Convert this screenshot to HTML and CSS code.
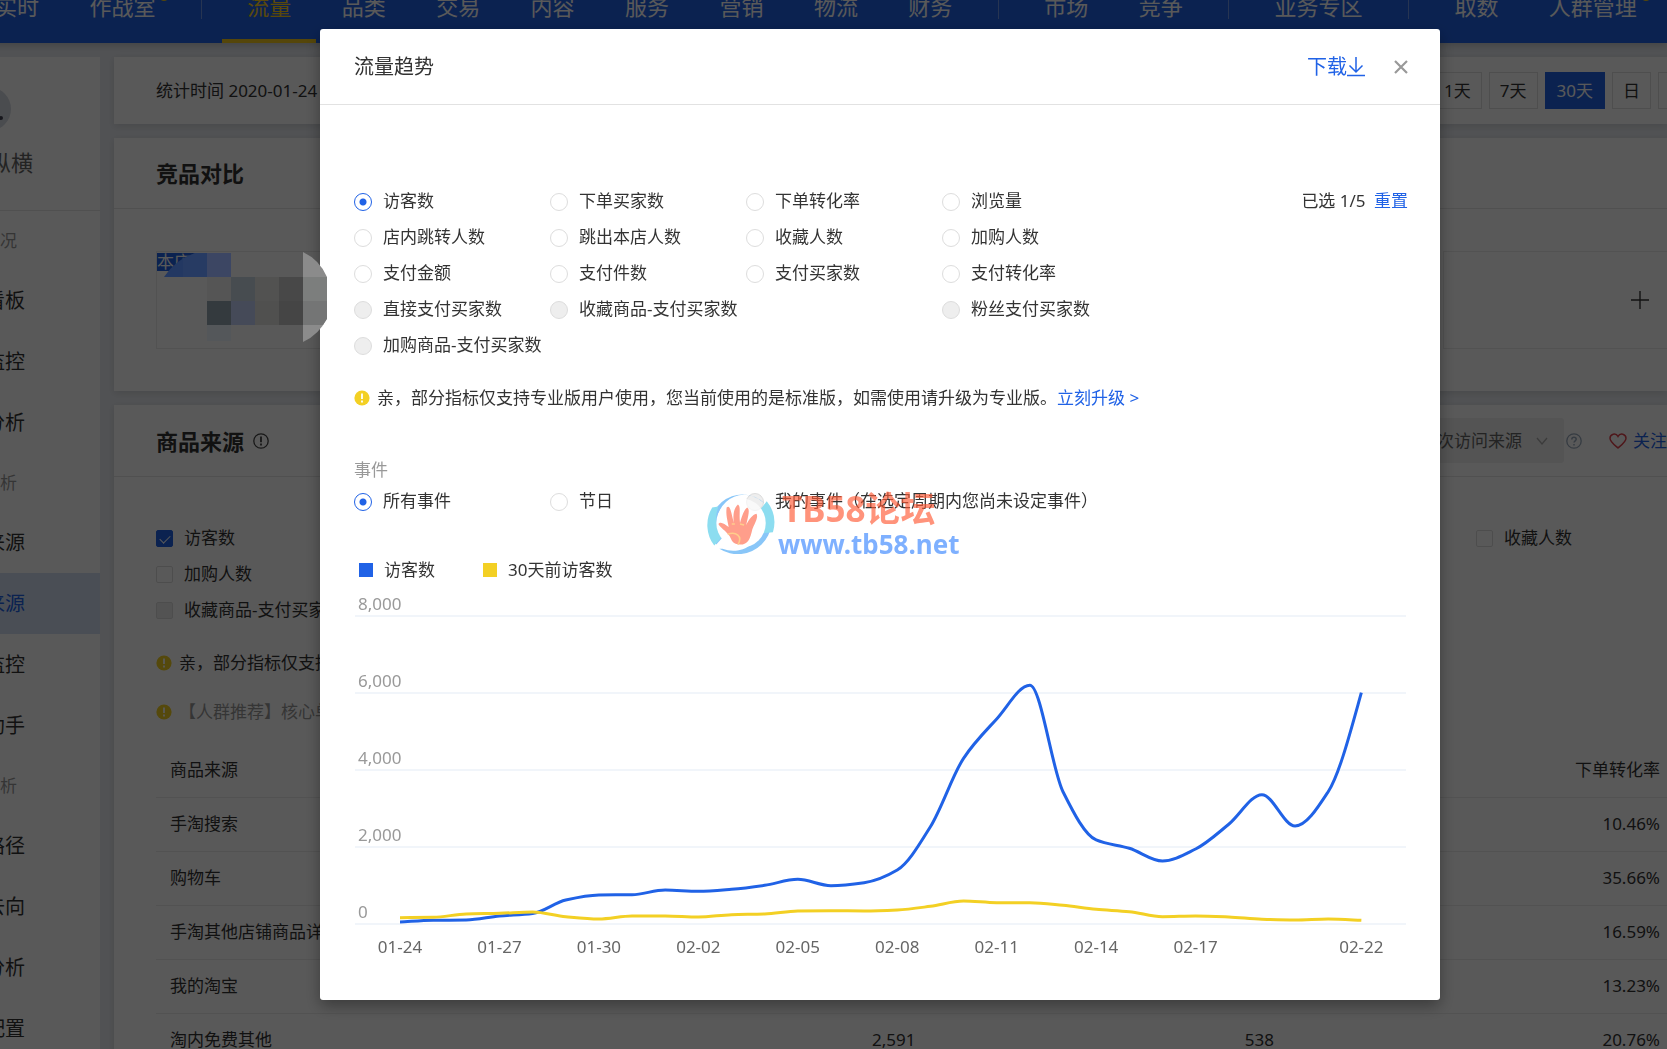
FILE: index.html
```html
<!DOCTYPE html>
<html lang="zh-CN">
<head>
  <meta charset="UTF-8" />
  <meta name="viewport" content="width=device-width, initial-scale=1.0"/>
  <title>流量趋势</title>
  <link rel="stylesheet" href="styles.css">
</head>
<body>
  <nav class="nav">
    <a href="#">实时</a>
    <a href="#" class="has-dot">作战室</a>
    <i></i>
    <a href="#" class="active">流量</a>
    <a href="#">品类</a>
    <a href="#">交易</a>
    <a href="#">内容</a>
    <a href="#">服务</a>
    <a href="#">营销</a>
    <a href="#">物流</a>
    <a href="#">财务</a>
    <i></i>
    <a href="#">市场</a>
    <a href="#">竞争</a>
    <i></i>
    <a href="#">业务专区</a>
    <i></i>
    <a href="#">取数</a>
    <a href="#" class="has-dot">人群管理</a>
  </nav>

  <div class="page">
    <aside class="sidebar">
      <div class="shop">
        <svg class="avatar" width="44" height="44" viewBox="0 0 44 44"><circle cx="22" cy="22" r="22" fill="#d5d9e2"/><circle cx="34" cy="31" r="2" fill="#445"/></svg>
        <span>纵横</span>
      </div>
      <h4>况</h4>
      <a href="#">看板</a>
      <a href="#">监控</a>
      <a href="#">分析</a>
      <h4>析</h4>
      <a href="#">来源</a>
      <a href="#" class="active">来源</a>
      <a href="#">监控</a>
      <a href="#">助手</a>
      <h4>析</h4>
      <a href="#">路径</a>
      <a href="#">去向</a>
      <a href="#">分析</a>
      <a href="#">配置</a>
    </aside>

    <main class="main">
      <section class="card date-bar">
        <span>统计时间 2020-01-24</span>
        <div class="dates">
          <button>1天</button>
          <button>7天</button>
          <button class="active">30天</button>
          <button>日</button>
          <button class="blank" aria-label="周"></button>
        </div>
      </section>

      <section class="card">
        <header class="card-head"><h2>竞品对比</h2></header>
        <div class="compare">
          <div class="slot"><span class="tag">本店</span></div>
          <div class="slot"></div>
          <div class="slot"></div>
          <div class="slot add">
            <svg width="18" height="18" viewBox="0 0 18 18" stroke="#333" stroke-width="1.4"><path d="M9 0v18M0 9h18"/></svg>
          </div>
        </div>
      </section>

      <section class="card source">
        <header class="card-head">
          <h2>商品来源</h2>
          <svg class="info" width="16" height="16" viewBox="0 0 16 16" fill="none" stroke="#444" stroke-width="1.3"><circle cx="8" cy="8" r="7.2"/><path d="M8 3.6v5.6M8 10.6v1.8" stroke-width="1.8"/></svg>
          <div class="head-tools">
            <div class="select">
              <select aria-label="来源"><option>每次访问来源</option></select>
              <svg width="12" height="8" viewBox="0 0 12 8" fill="none" stroke="#aaa" stroke-width="1.3"><path d="M1 1l5 6 5-6"/></svg>
            </div>
            <svg width="16" height="16" viewBox="0 0 16 16" fill="none" stroke="#9aaabd" stroke-width="1.3"><circle cx="8" cy="8" r="7.2"/><path d="M5.8 6.4c0-3 4.4-2.8 4.4-.2 0 1.6-2.2 1.6-2.2 3.4M8 11v1.6" stroke-width="1.5"/></svg>
            <a href="#" class="follow">
              <svg width="18" height="16" viewBox="0 0 18 16" fill="none" stroke="#e0434d" stroke-width="1.5"><path d="M9 15C5 11.500 1 8.600 1 5.200 1 .8 6.800-.6 9 3.400 11.200-.6 17 .8 17 5.200 17 8.600 13 11.500 9 15z"/></svg>
              关注
            </a>
          </div>
        </header>
        <div class="checks">
          <label><input type="checkbox" checked>访客数</label>
          <label class="far"><input type="checkbox">收藏人数</label>
          <label><input type="checkbox">加购人数</label>
          <label><input type="checkbox" disabled>收藏商品-支付买家数</label>
        </div>
        <p class="tip">
          <svg width="16" height="16" viewBox="0 0 16 16"><circle cx="8" cy="8" r="7.600" fill="#f3d024"/><path d="M8 3.500v5.500M8 10.600v1.800" stroke="#fff" stroke-width="1.8"/></svg>
          亲，部分指标仅支持
        </p>
        <p class="tip grey">
          <svg width="16" height="16" viewBox="0 0 16 16"><circle cx="8" cy="8" r="7.600" fill="#f3d024"/><path d="M8 3.500v5.500M8 10.600v1.800" stroke="#fff" stroke-width="1.8"/></svg>
          【人群推荐】核心单
        </p>
        <table>
          <thead>
            <tr><th class="name">商品来源</th><th></th><th></th><th class="rate">下单转化率</th></tr>
          </thead>
          <tbody>
            <tr><td>手淘搜索</td><td></td><td></td><td>10.46%</td></tr>
            <tr><td>购物车</td><td></td><td></td><td>35.66%</td></tr>
            <tr><td>手淘其他店铺商品详</td><td></td><td></td><td>16.59%</td></tr>
            <tr><td>我的淘宝</td><td></td><td></td><td>13.23%</td></tr>
            <tr><td>淘内免费其他</td><td>2,591</td><td>538</td><td>20.76%</td></tr>
          </tbody>
        </table>
      </section>
    </main>
  </div>

  <div class="overlay">
    <div class="modal" role="dialog" aria-labelledby="title">
      <header class="modal-head">
        <h1 id="title">流量趋势</h1>
        <a href="#" class="download">下载<svg width="18" height="20" viewBox="0 0 18 20" fill="none" stroke="#2062e6" stroke-width="1.500"><path d="M9 0v15M2.500 8.500L9 15l6.500-6.500M0 18.500h18"/></svg></a>
        <button class="close" aria-label="关闭">
          <svg width="14" height="14" viewBox="0 0 14 14" stroke="#999" stroke-width="2.200"><path d="M1 1l12 12M13 1L1 13"/></svg>
        </button>
      </header>

      <div class="modal-body">
        <div class="metrics">
          <div class="radios">
            <label><input type="radio" name="metric" checked>访客数</label>
            <label><input type="radio" name="metric">下单买家数</label>
            <label><input type="radio" name="metric">下单转化率</label>
            <label><input type="radio" name="metric">浏览量</label>
            <label><input type="radio" name="metric">店内跳转人数</label>
            <label><input type="radio" name="metric">跳出本店人数</label>
            <label><input type="radio" name="metric">收藏人数</label>
            <label><input type="radio" name="metric">加购人数</label>
            <label><input type="radio" name="metric">支付金额</label>
            <label><input type="radio" name="metric">支付件数</label>
            <label><input type="radio" name="metric">支付买家数</label>
            <label><input type="radio" name="metric">支付转化率</label>
            <label><input type="radio" name="metric" disabled>直接支付买家数</label>
            <label class="wide"><input type="radio" name="metric" disabled>收藏商品-支付买家数</label>
            <label><input type="radio" name="metric" disabled>粉丝支付买家数</label>
            <label><input type="radio" name="metric" disabled>加购商品-支付买家数</label>
          </div>
          <div class="picked">已选 1/5 <a href="#">重置</a></div>
        </div>

        <p class="upgrade">
          <svg width="16" height="16" viewBox="0 0 16 16"><circle cx="8" cy="8" r="7.600" fill="#f3d024"/><path d="M8 3.500v5.500M8 10.600v1.800" stroke="#fff" stroke-width="1.8"/></svg>
          <span>亲，部分指标仅支持专业版用户使用，您当前使用的是标准版，如需使用请升级为专业版。<a href="#">立刻升级 &gt;</a></span>
        </p>

        <div class="event-title">事件</div>
        <div class="radios">
          <label><input type="radio" name="event" checked>所有事件</label>
          <label><input type="radio" name="event">节日</label>
          <label class="wide"><input type="radio" name="event" disabled>我的事件（在选定周期内您尚未设定事件）</label>
        </div>

        <div class="legend">
          <span><i class="blue"></i>访客数</span>
          <span><i class="yellow"></i>30天前访客数</span>
        </div>

        <svg class="chart" id="chart" viewBox="0 0 1054 379"></svg>
      </div>
    </div>
  </div>

  <!-- blurred competitor card -->
  <svg class="mosaic" width="170" height="91" viewBox="157 251 170 91">
    <path d="M164 277Q176 259 195 253H207V277z" fill="#233862"/>
    <path d="M183 259L195 253H207V277H183z" fill="#273b63"/>
    <path d="M207 253h24v24h-24z" fill="#3c4663"/>
    <path d="M207 277h24v24h-24z" fill="#555"/>
    <path d="M231 277h24v24h-24z" fill="#474c50"/>
    <path d="M255 277h24v24h-24z" fill="#525251"/>
    <path d="M279 277h24v24h-24z" fill="#484848"/>
    <path d="M207 301h24v24h-24z" fill="#343a3e"/>
    <path d="M231 301h24v24h-24z" fill="#454a58"/>
    <path d="M255 301h24v24h-24z" fill="#50504f"/>
    <path d="M279 301h24v24h-24z" fill="#454545"/>
    <path d="M207 325h24v16h-24z" fill="#54575a"/>
    <path d="M303 252A49 49 0 0 1 327 277V318A49 49 0 0 1 303 342z" fill="#8b8b8b"/>
    <path d="M303 277h24v24h-24z" fill="#7c7e7d"/>
    <path d="M303 301h24v18l-4 6h-20z" fill="#747575"/>
  </svg>

  <div class="watermark">
    <svg width="70" height="70" viewBox="0 0 68 68">
      <path d="M58 14A31 31 0 0 0 11 54L17 47A26 26 0 0 1 55 12z" fill="#4aa8f5"/>
      <path d="M7 18A33 33 0 0 0 9 55L17 46Q7 34 13 17z" fill="#4fcbe8"/>
      <path d="M14 58A33 33 0 0 0 60 13L52 22A27 27 0 0 1 17 58z" fill="#4aa8f5"/>
      <path d="M60 12A33 33 0 0 1 66 42L56 43Q60 30 52 22z" fill="#4fcbe8"/>
      <circle cx="35" cy="33" r="24" fill="#fff"/>
      <path d="M24 46C20 40 15 38 13 34c2-3 6 0 10 3-1-6-3-12-2-19 3-3 4 2 7 15-1-9 0-14 4-18 3 2 1 8 2 18 2-7 4-13 7-15 3 2 1 8-1 17 3-6 6-10 10-11 2 3-1 8-4 15-2 9-4 15-12 15-7 0-8-4-10-8z" fill="#ff6a4d"/>
      <path d="M22 44c8-3 15 2 10 10M34 34l4 1M26 34l3 0" fill="none" stroke="#ffb34d" stroke-width="1.500"/>
    </svg>
    <div>
      <b>TB58论坛</b>
      <em>www.tb58.net</em>
    </div>
  </div>

  <script>
    const visitors = [52, 96, 104, 208, 273, 623, 753, 761, 883, 849, 901, 1005, 1161, 995, 1073,
      1403, 2527, 4304, 5325, 6200, 3436, 2182, 1966, 1636, 1948, 2590, 3358, 2545, 3436, 6008];
    const previous = [164, 174, 260, 278, 312, 190, 130, 208, 208, 182, 242, 260, 338, 345, 338,
      364, 460, 597, 553, 553, 486, 382, 320, 190, 208, 182, 122, 104, 130, 96];
    const ticks = { 0: "01-24", 3: "01-27", 6: "01-30", 9: "02-02", 12: "02-05", 15: "02-08",
      18: "02-11", 21: "02-14", 24: "02-17", 29: "02-22" };

    const STEP = 33.15;
    const xAt = i => 46 + STEP * i;
    const yAt = v => 343 - v / 2000 * 77;

    // smooth line that never overshoots its points
    function linePath(values) {
      const y = values.map(yAt);
      const slope = y.map((v, i) => {
        if (i === 0) return (y[1] - v) / STEP;
        if (i === y.length - 1) return (v - y[i - 1]) / STEP * 1.2;
        const a = (v - y[i - 1]) / STEP;
        const b = (y[i + 1] - v) / STEP;
        return a * b <= 0 ? 0 : 2 * a * b / (a + b);
      });
      let d = `M${xAt(0)} ${y[0]}`;
      for (let i = 1; i < y.length; i++) {
        const h = STEP / 3;
        d += `C${xAt(i - 1) + h} ${y[i - 1] + slope[i - 1] * h} ${xAt(i) - h} ${y[i] - slope[i] * h} ${xAt(i)} ${y[i]}`;
      }
      return d;
    }

    let svg = "";
    for (let v = 0; v <= 8000; v += 2000) {
      svg += `<path class="grid" d="M1 ${yAt(v)}H1052"/>`;
      svg += `<text class="y" x="4" y="${yAt(v) - 6}">${v.toLocaleString("en-US")}</text>`;
    }
    for (const i in ticks) {
      svg += `<text class="x" x="${xAt(i)}" y="372">${ticks[i]}</text>`;
    }
    svg += `<path class="line blue" d="${linePath(visitors)}"/>`;
    svg += `<path class="line yellow" d="${linePath(previous)}"/>`;
    document.getElementById("chart").innerHTML = svg;
  </script>
</body>
</html>
```
FILE: styles.css
```css
* {
  box-sizing: border-box;
}
body {
  margin: 0;
  height: 100vh;
  overflow: hidden;
  background: #e9ecf1;
  color: #333;
  font-family: "Noto Sans", "Noto Sans CJK SC", sans-serif;
  font-size: 17px;
  line-height: 26px;
}
h1, h2, h4, p {
  margin: 0;
}
a {
  color: #2062e6;
  text-decoration: none;
}
button, select, input {
  font: inherit;
  color: inherit;
  margin: 0;
}

/* top navigation */
.nav {
  display: flex;
  justify-content: space-between;
  height: 43px;
  margin-left: -30px;
  padding-right: 5px;
  background: #2062e6;
  box-shadow: 0 2px 8px rgba(0, 0, 0, 0.2);
}
.nav a {
  position: relative;
  padding: 0 25px;
  color: #fff;
  font-size: 22px;
  line-height: 12px;
  white-space: nowrap;
}
.nav a.active {
  color: #ffd21e;
  border-bottom: 4px solid #f3c91e;
}
.nav i {
  width: 1px;
  height: 19px;
  margin: 0 20px;
  background: #6f97ec;
}
.has-dot::after {
  content: "";
  position: absolute;
  top: -7px;
  right: 12px;
  width: 8px;
  height: 8px;
  border-radius: 4px;
  background: #f3c91e;
}

.page {
  display: flex;
  gap: 14px;
  padding-top: 14px;
}

/* left menu */
.sidebar {
  flex: 0 0 140px;
  margin-left: -40px;
  background: #fff;
}
.shop {
  height: 154px;
  padding-top: 30px;
  border-bottom: 1px solid #e6e6e6;
  color: #666;
  font-size: 22px;
}
.shop .avatar {
  display: block;
  margin-left: 7px;
}
.shop span {
  display: block;
  padding: 18px 0 0 29px;
}
.sidebar h4 {
  padding-left: 40px;
  color: #999;
  font-size: 17px;
  font-weight: normal;
  line-height: 59px;
}
.sidebar > a {
  display: block;
  padding-left: 25px;
  color: #333;
  font-size: 20px;
  line-height: 61px;
}
.sidebar > a.active {
  background: #d3e0f4;
  color: #2062e6;
}

/* cards */
.main {
  flex: 1;
  min-width: 0;
}
.card {
  margin-bottom: 14px;
  overflow: hidden;
  background: #fff;
  box-shadow: 0 2px 8px rgba(0, 0, 0, 0.12);
}
.date-bar {
  display: flex;
  justify-content: space-between;
  align-items: center;
  height: 67px;
  padding-left: 42px;
}
.dates {
  display: flex;
  gap: 7px;
  margin-right: -31px;
}
.dates button {
  height: 37px;
  padding: 0 10px;
  border: 1px solid #e0e0e0;
  background: #fff;
}
.dates button.active {
  padding: 0 11px;
  border-color: #2062e6;
  background: #2062e6;
  color: #fff;
}
.dates .blank {
  width: 40px;
}
.card-head {
  display: flex;
  align-items: center;
  height: 71px;
  padding-left: 42px;
  border-bottom: 1px solid #e6e6e6;
}
.card-head h2 {
  font-size: 22px;
}
.source .card-head {
  height: 72px;
}
.compare {
  display: grid;
  grid-template-columns: repeat(4, 393px);
  gap: 36px;
  padding: 42px;
}
.slot {
  height: 98px;
  border: 1px solid #eaeaea;
}
.slot.add {
  display: flex;
  align-items: center;
  justify-content: center;
}
.tag {
  display: block;
  width: 38px;
  margin-top: 1px;
  background: #2062e6;
  color: #fff;
  line-height: 18px;
}
.info {
  margin-left: 9px;
}
.head-tools {
  display: flex;
  align-items: center;
  gap: 2px;
  margin-left: auto;
}
.select {
  position: relative;
  color: #666;
}
.select select {
  height: 45px;
  padding: 0 42px 0 17px;
  border: 0;
  border-radius: 3px;
  background: #f0f0f0;
  appearance: none;
}
.select svg {
  position: absolute;
  top: 19px;
  right: 16px;
}
.follow {
  display: flex;
  align-items: center;
  gap: 6px;
  margin-left: 25px;
}
.checks {
  display: grid;
  grid-template-columns: repeat(7, 220px);
  padding: 43px 0 0 42px;
  line-height: 36px;
}
.checks label {
  display: flex;
  align-items: center;
  gap: 11px;
  grid-column: 1;
  white-space: nowrap;
}
.checks .far {
  grid-column: 7;
}
.checks input {
  flex: none;
  width: 17px;
  height: 17px;
  border: 1px solid #ddd;
  border-radius: 2px;
  background: #fff;
  appearance: none;
}
.checks input:checked {
  border-color: #2062e6;
  background: #2062e6;
}
.checks input:checked::before {
  content: "";
  display: block;
  width: 9px;
  height: 5px;
  margin: 4px 3px;
  border: solid #fff;
  border-width: 0 0 1px 1px;
  transform: rotate(-45deg);
}
.checks input:disabled {
  background: #eee;
}
.tip {
  display: flex;
  align-items: center;
  gap: 7px;
  margin: 22px 0 23px 42px;
}
.tip.grey {
  color: #999;
}
table {
  width: calc(100% - 42px);
  margin: -5px 0 0 42px;
  border-collapse: collapse;
  table-layout: fixed;
}
th, td {
  height: 54px;
  padding: 0 7px;
  border-bottom: 1px solid #ececec;
  font-weight: normal;
  text-align: right;
}
th:first-child, td:first-child {
  padding-left: 14px;
  text-align: left;
}
.name {
  width: 27%;
}
.rate {
  width: 386px;
}

/* dialog */
.overlay {
  position: fixed;
  inset: 0;
  display: flex;
  align-items: flex-start;
  padding: 29px 227px 49px 320px;
  background: rgba(0, 0, 0, 0.65);
}
.modal {
  flex: 1;
  border-radius: 3px;
  background: #fff;
  box-shadow: 0 6px 16px rgba(0, 0, 0, 0.35);
}
.modal-head {
  display: flex;
  align-items: center;
  height: 76px;
  padding: 0 32px 0 34px;
  border-bottom: 1px solid #e2e2e2;
}
.modal-head h1 {
  font-size: 20px;
  font-weight: normal;
}
.download {
  display: flex;
  align-items: center;
  margin-left: auto;
  font-size: 20px;
}
.close {
  display: flex;
  margin-left: 29px;
  padding: 0;
  border: 0;
  background: none;
  cursor: pointer;
}
.modal-body {
  padding: 78px 32px 40px 34px;
}
.metrics {
  display: flex;
  justify-content: space-between;
}
.radios {
  display: grid;
  grid-template-columns: repeat(4, 196px);
  line-height: 36px;
}
.radios label {
  display: flex;
  align-items: center;
  gap: 11px;
  white-space: nowrap;
}
.radios .wide {
  grid-column: span 2;
}
.radios input {
  flex: none;
  width: 18px;
  height: 18px;
  margin-top: 2px;
  border: 1px solid #ddd;
  border-radius: 50%;
  background: #fff;
  appearance: none;
}
.radios input:checked {
  border-color: #2062e6;
  background: radial-gradient(circle, #2062e6 3px, #fff 4px);
}
.radios input:disabled {
  background: #eee;
}
.picked {
  line-height: 36px;
}
.picked a {
  margin-left: 4px;
}
.upgrade {
  display: flex;
  align-items: center;
  gap: 7px;
  margin-top: 22px;
}
.event-title {
  margin-top: 46px;
  color: #999;
}
.legend {
  display: flex;
  gap: 48px;
  margin-top: 40px;
  padding-left: 5px;
  line-height: 22px;
}
.legend span {
  display: flex;
  align-items: center;
  gap: 11px;
}
.legend i {
  width: 14px;
  height: 14px;
}
.legend .blue {
  background: #2062e6;
}
.legend .yellow {
  background: #f3d024;
}

/* chart */
.chart {
  display: block;
  width: 100%;
}
.chart text {
  font-size: 17px;
}
.chart .y {
  fill: #999;
}
.chart .x {
  fill: #666;
  text-anchor: middle;
}
.chart .grid {
  stroke: #f1f5fa;
  stroke-width: 2;
}
.chart .line {
  fill: none;
  stroke-width: 3;
}
.chart .line.blue {
  stroke: #2062e6;
}
.chart .line.yellow {
  stroke: #f3d024;
}

.mosaic {
  position: absolute;
  top: 251px;
  left: 157px;
}
.watermark {
  position: absolute;
  top: 489px;
  left: 705px;
  display: flex;
  gap: 3px;
  opacity: 0.65;
  pointer-events: none;
}
.watermark b {
  display: block;
  margin-left: 4px;
  color: #ff5a35;
  font-size: 35px;
  line-height: 39px;
}
.watermark em {
  display: block;
  color: #3a86ff;
  font-size: 26px;
  font-style: normal;
  font-weight: bold;
  line-height: 32px;
}
```
